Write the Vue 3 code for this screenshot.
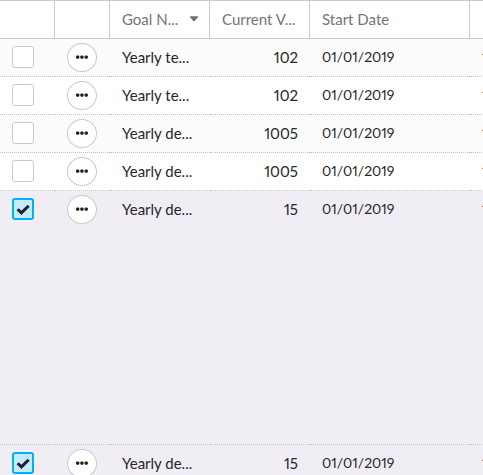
<script setup>
import { ref } from 'vue'

const rows = ref([
  { id: 1, name: 'Yearly te...', value: 102, start: '01/01/2019', end: '12/31/2019', selected: false },
  { id: 2, name: 'Yearly te...', value: 102, start: '01/01/2019', end: '12/31/2019', selected: false },
  { id: 3, name: 'Yearly de...', value: 1005, start: '01/01/2019', end: '12/31/2019', selected: false },
  { id: 4, name: 'Yearly de...', value: 1005, start: '01/01/2019', end: '12/31/2019', selected: false },
  { id: 5, name: 'Yearly de...', value: 15, start: '01/01/2019', end: '12/31/2019', selected: true, expanded: true },
  { id: 6, name: 'Yearly de...', value: 15, start: '01/01/2019', end: '12/31/2019', selected: true }
])
</script>

<template>
  <div class="grid">
    <table>
      <colgroup>
        <col class="c-tool" /><col class="c-tool" /><col class="c-mid" /><col class="c-mid" /><col class="c-date" /><col />
      </colgroup>
      <thead>
        <tr>
          <th></th>
          <th></th>
          <th class="sortable">
            <div class="head">
              <span>Goal N...</span>
              <svg class="sort" width="10" height="6" viewBox="0 0 10 6" aria-hidden="true">
                <path d="M1.2 0.3h7.6q.8.1.3.8L5.6 5q-.6.6-1.2 0L.9 1.1Q.4.4 1.2.3z" />
              </svg>
            </div>
          </th>
          <th>Current V...</th>
          <th>Start Date</th>
          <th></th>
        </tr>
      </thead>
      <tbody>
        <tr v-for="row in rows" :key="row.id" :class="{ selected: row.selected, expanded: row.expanded }">
          <td class="check">
            <label class="tick">
              <input v-model="row.selected" type="checkbox" :aria-label="row.name" />
              <svg v-if="row.selected" width="14" height="12" viewBox="0 0 14 12" aria-hidden="true">
                <path d="M1.6 6.2l3.8 3.7L12.7 2.7" />
              </svg>
            </label>
          </td>
          <td class="action">
            <button type="button" aria-label="Actions">
              <svg width="14" height="5" viewBox="0 0 14 5" aria-hidden="true">
                <rect x="1" y="0.4" width="3.3" height="3.3" rx="1.2" />
                <rect x="5.3" y="0.4" width="3.3" height="3.3" rx="1.2" />
                <rect x="9.6" y="0.4" width="3.3" height="3.3" rx="1.2" />
              </svg>
            </button>
          </td>
          <td>{{ row.name }}</td>
          <td class="num">{{ row.value }}</td>
          <td class="date">{{ row.start }}</td>
          <td class="date">{{ row.end }}</td>
        </tr>
      </tbody>
    </table>
  </div>
</template>

<style>
body {
  margin: 0;
  background: #fff;
}
</style>

<style scoped>
.grid {
  height: 100vh;
  overflow: hidden;
  font-family: Lato, "Liberation Sans", sans-serif;
  font-size: 15px;
  line-height: 20px;
  font-variant-numeric: proportional-nums;
  color: #26272b;
}
table {
  width: 100%;
  min-width: 630px;
  table-layout: fixed;
  border-collapse: separate;
  border-spacing: 0;
  border-top: 1px solid #cbc9cf;
}
.c-tool { width: 55px; }
.c-mid { width: 100px; }
.c-date { width: 160px; }
th,
td {
  box-sizing: border-box;
  height: 38px;
  padding: 0 12px;
  text-align: left;
  white-space: nowrap;
  overflow: hidden;
}
th {
  padding-bottom: 1px;
  border-right: 1px solid #cbc9cf;
  border-bottom: 1px solid #cbc9cf;
  font-weight: 400;
  color: #72747e;
}
th.sortable { padding-right: 10px; }
.head {
  display: flex;
  align-items: center;
  justify-content: space-between;
}
.sort { fill: #6c6e79; }
td {
  border-bottom: 1px dotted #c3c2c6;
  vertical-align: top;
  padding-top: 8px;
}
tr:nth-child(odd) td { background: #fbfbfb; }
tr.selected td { background: #f0edf5; }
tr.expanded td { height: 254px; }
td.num { text-align: right; }
td.date { font-size: 14px; }
td.check { padding-top: 7px; }
td.action { padding-top: 4px; }
.tick {
  display: grid;
  width: 22px;
  height: 22px;
}
.tick > * {
  grid-area: 1 / 1;
  place-self: center;
}
.tick input {
  appearance: none;
  box-sizing: border-box;
  width: 22px;
  height: 22px;
  margin: 0;
  border: 1px solid #cbc9cf;
  border-radius: 3px;
  background: #fff;
}
.tick input:checked {
  border: 2px solid #00b1f2;
  background: #c4eafc;
}
.tick svg {
  pointer-events: none;
  fill: none;
  stroke: #222226;
  stroke-width: 3;
}
button {
  display: flex;
  align-items: center;
  justify-content: center;
  box-sizing: border-box;
  width: 30px;
  height: 29px;
  padding: 0;
  border: 1px solid #cbc9cf;
  border-radius: 50%;
  background: #fff;
}
button svg { fill: #2c1a14; }
</style>
